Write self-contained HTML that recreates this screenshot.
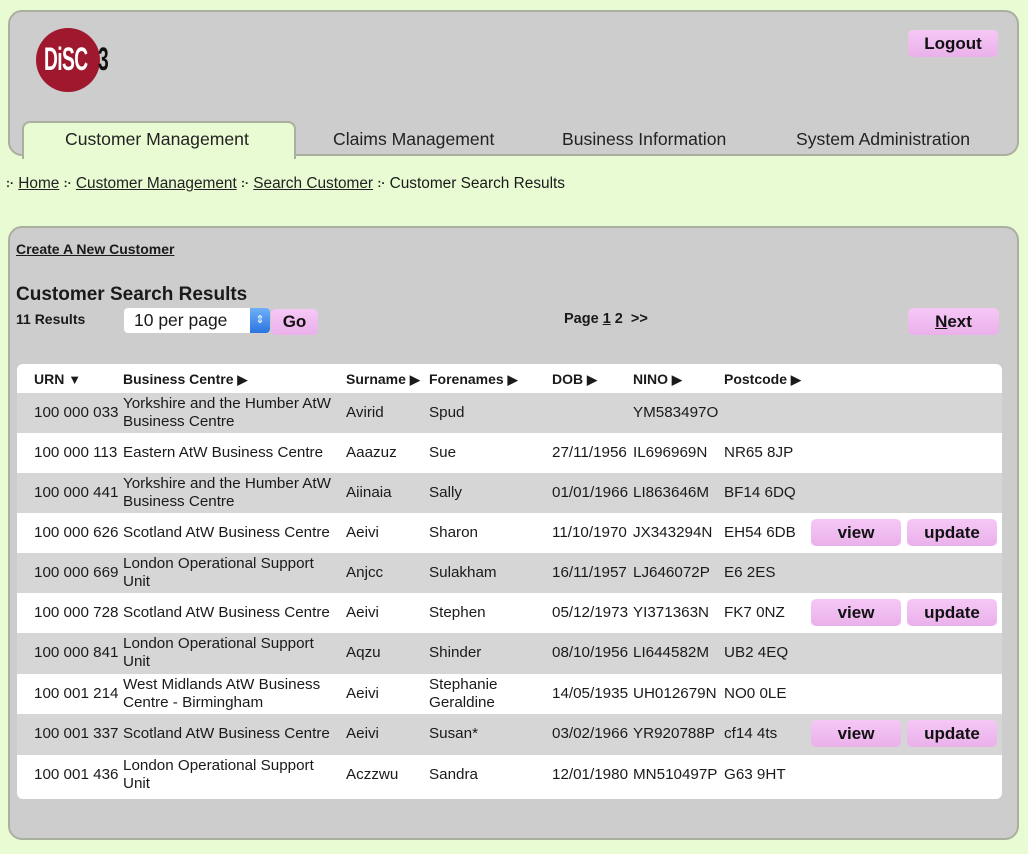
<!DOCTYPE html>
<html><head><meta charset="utf-8"><style>
*{margin:0;padding:0;box-sizing:border-box}
body{width:1028px;height:854px;background:#e9fbd3;font-family:"Liberation Sans",sans-serif;color:#1a1a1a;position:relative;overflow:hidden}
.a{position:absolute}
.panel{background:#cdcdcd;border:2px solid #aab0a0;border-radius:14px}
.btn{position:absolute;background:linear-gradient(#f6c8f6,#eab0ea);border-radius:5px;font-weight:bold;text-align:center;color:#111}
.tab{position:absolute;top:129px;font-size:17.6px;color:#222}
.bc{position:absolute;top:175px;font-size:15.4px;white-space:nowrap}
.bc u{color:#222}
.dot{display:inline-block;font-weight:bold;font-size:12px;vertical-align:1px}
.row{position:absolute;left:17px;width:985px;height:41px;font-size:15.2px}
.row span{position:absolute;line-height:18px;white-space:nowrap}
.g{background:#d6d6d6}
.w{background:#fff}
.hd span{position:absolute;font-weight:bold;font-size:14px;top:7px;white-space:nowrap}
.hd b{font-size:13px}
.v{position:absolute;top:6px;height:27px;width:90px;line-height:27px;font-size:17px}
</style></head><body>
<div class="a panel" style="left:8px;top:10px;width:1011px;height:146px"></div>
<div class="a" style="left:22px;top:121px;width:274px;height:38px;background:#e9fbd3;border:2px solid #aab0a0;border-bottom:none;border-radius:8px 8px 0 0"></div>
<div class="a" style="left:36px;top:28px;width:64px;height:64px;border-radius:50%;background:#a0182e"></div>
<div class="a" style="left:44px;top:43px;font-size:32px;line-height:32px;color:#fff;font-weight:bold;letter-spacing:-1px;transform:scaleX(.6);transform-origin:left">DiSC</div>
<div class="a" style="left:98px;top:43px;font-size:32px;line-height:32px;color:#111;font-weight:bold;transform:scaleX(.6);transform-origin:left">3</div>
<div class="btn" style="left:908px;top:30px;width:90px;height:27px;line-height:27px;font-size:17px">Logout</div>
<div class="tab" style="left:65px">Customer Management</div>
<div class="tab" style="left:333px">Claims Management</div>
<div class="tab" style="left:562px">Business Information</div>
<div class="tab" style="left:796px">System Administration</div>
<div class="bc" style="left:6px"><span class="dot">:·</span> <u>Home</u> <span class="dot">:·</span> <u>Customer Management</u> <span class="dot">:·</span> <u>Search Customer</u> <span class="dot">:·</span> Customer Search Results</div>

<div class="a panel" style="left:8px;top:226px;width:1011px;height:614px"></div>
<div class="a" style="left:16px;top:241px;font-size:14px;font-weight:bold;text-decoration:underline">Create A New Customer</div>
<div class="a" style="left:16px;top:284px;font-size:19px;font-weight:bold">Customer Search Results</div>
<div class="a" style="left:16px;top:311px;font-size:14px;font-weight:bold">11 Results</div>
<div class="a" style="left:124px;top:308px;width:146px;height:25px;background:#fff;border-radius:4px;font-size:17.5px;line-height:25px;padding-left:10px">10 per page</div>
<div class="a" style="left:250px;top:308px;width:20px;height:25px;background:linear-gradient(#6fb0f8,#2a74e0);border-radius:0 4px 4px 0;color:#fff;font-size:11px;text-align:center;line-height:25px">⇕</div>
<div class="btn" style="left:271px;top:309px;width:47px;height:26px;line-height:26px;font-size:17px">Go</div>
<div class="a" style="left:564px;top:311px;font-size:14.5px;font-weight:bold">Page <u>1</u> 2 &nbsp;&gt;&gt;</div>
<div class="btn" style="left:908px;top:308px;width:91px;height:27px;line-height:27px;font-size:17px"><u>N</u>ext</div>

<div class="a" style="left:17px;top:364px;width:985px;height:435px;background:#fff;border-radius:6px;overflow:hidden">
<div class="hd" style="position:absolute;left:0;top:0;width:985px;height:29px">
<span style="left:17px">URN <b>▼</b></span><span style="left:106px">Business Centre <b>▶</b></span><span style="left:329px">Surname <b>▶</b></span><span style="left:412px">Forenames <b>▶</b></span><span style="left:535px">DOB <b>▶</b></span><span style="left:616px">NINO <b>▶</b></span><span style="left:707px">Postcode <b>▶</b></span>
</div>
</div>

<div class="row g" style="top:393px"><span style="left:17px;top:11px">100 000 033</span><span style="left:106px;top:2px">Yorkshire and the Humber AtW<br>Business Centre</span><span style="left:329px;top:11px">Avirid</span><span style="left:412px;top:11px">Spud</span><span style="left:616px;top:11px">YM583497O</span></div>
<div class="row w" style="top:433px"><span style="left:17px;top:11px">100 000 113</span><span style="left:106px;top:11px">Eastern AtW Business Centre</span><span style="left:329px;top:11px">Aaazuz</span><span style="left:412px;top:11px">Sue</span><span style="left:535px;top:11px">27/11/1956</span><span style="left:616px;top:11px">IL696969N</span><span style="left:707px;top:11px">NR65 8JP</span></div>
<div class="row g" style="top:473px"><span style="left:17px;top:11px">100 000 441</span><span style="left:106px;top:2px">Yorkshire and the Humber AtW<br>Business Centre</span><span style="left:329px;top:11px">Aiinaia</span><span style="left:412px;top:11px">Sally</span><span style="left:535px;top:11px">01/01/1966</span><span style="left:616px;top:11px">LI863646M</span><span style="left:707px;top:11px">BF14 6DQ</span></div>
<div class="row w" style="top:513px"><span style="left:17px;top:11px">100 000 626</span><span style="left:106px;top:11px">Scotland AtW Business Centre</span><span style="left:329px;top:11px">Aeivi</span><span style="left:412px;top:11px">Sharon</span><span style="left:535px;top:11px">11/10/1970</span><span style="left:616px;top:11px">JX343294N</span><span style="left:707px;top:11px">EH54 6DB</span><div class="btn v" style="left:794px">view</div><div class="btn v" style="left:890px">update</div></div>
<div class="row g" style="top:553px"><span style="left:17px;top:11px">100 000 669</span><span style="left:106px;top:2px">London Operational Support<br>Unit</span><span style="left:329px;top:11px">Anjcc</span><span style="left:412px;top:11px">Sulakham</span><span style="left:535px;top:11px">16/11/1957</span><span style="left:616px;top:11px">LJ646072P</span><span style="left:707px;top:11px">E6 2ES</span></div>
<div class="row w" style="top:593px"><span style="left:17px;top:11px">100 000 728</span><span style="left:106px;top:11px">Scotland AtW Business Centre</span><span style="left:329px;top:11px">Aeivi</span><span style="left:412px;top:11px">Stephen</span><span style="left:535px;top:11px">05/12/1973</span><span style="left:616px;top:11px">YI371363N</span><span style="left:707px;top:11px">FK7 0NZ</span><div class="btn v" style="left:794px">view</div><div class="btn v" style="left:890px">update</div></div>
<div class="row g" style="top:633px"><span style="left:17px;top:11px">100 000 841</span><span style="left:106px;top:2px">London Operational Support<br>Unit</span><span style="left:329px;top:11px">Aqzu</span><span style="left:412px;top:11px">Shinder</span><span style="left:535px;top:11px">08/10/1956</span><span style="left:616px;top:11px">LI644582M</span><span style="left:707px;top:11px">UB2 4EQ</span></div>
<div class="row w" style="top:674px"><span style="left:17px;top:11px">100 001 214</span><span style="left:106px;top:2px">West Midlands AtW Business<br>Centre - Birmingham</span><span style="left:329px;top:11px">Aeivi</span><span style="left:412px;top:2px">Stephanie<br>Geraldine</span><span style="left:535px;top:11px">14/05/1935</span><span style="left:616px;top:11px">UH012679N</span><span style="left:707px;top:11px">NO0 0LE</span></div>
<div class="row g" style="top:714px"><span style="left:17px;top:11px">100 001 337</span><span style="left:106px;top:11px">Scotland AtW Business Centre</span><span style="left:329px;top:11px">Aeivi</span><span style="left:412px;top:11px">Susan*</span><span style="left:535px;top:11px">03/02/1966</span><span style="left:616px;top:11px">YR920788P</span><span style="left:707px;top:11px">cf14 4ts</span><div class="btn v" style="left:794px">view</div><div class="btn v" style="left:890px">update</div></div>
<div class="row w" style="top:755px;border-radius:0 0 6px 6px"><span style="left:17px;top:11px">100 001 436</span><span style="left:106px;top:2px">London Operational Support<br>Unit</span><span style="left:329px;top:11px">Aczzwu</span><span style="left:412px;top:11px">Sandra</span><span style="left:535px;top:11px">12/01/1980</span><span style="left:616px;top:11px">MN510497P</span><span style="left:707px;top:11px">G63 9HT</span></div>
</body></html>
